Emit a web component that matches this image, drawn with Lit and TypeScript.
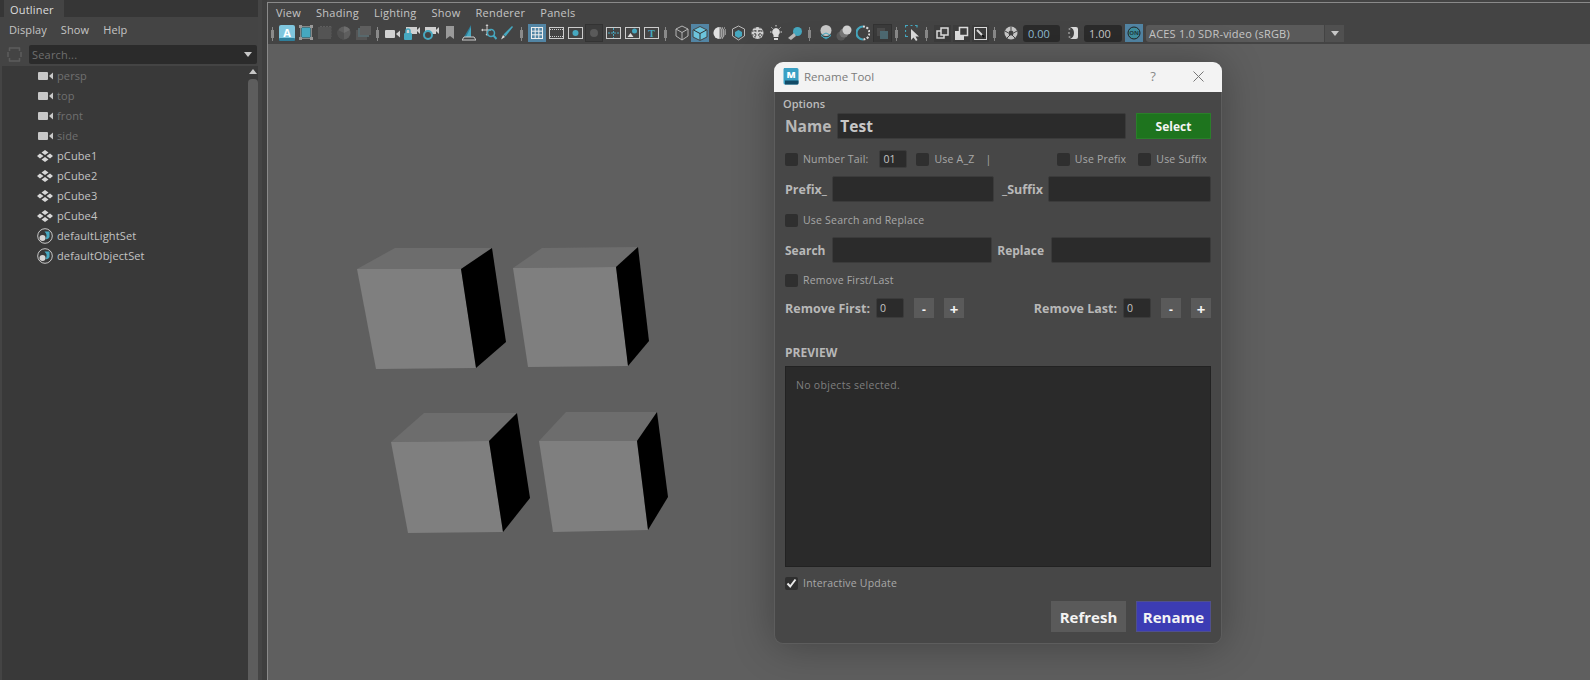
import { LitElement, html, css, svg } from "lit";
import { customElement } from "lit/decorators.js";

const L = "#d2d2d2";
const T = "#46a8c0";

const camera = (c = L) => svg`<rect x="0" y="4" width="10" height="8" rx="1" fill="${c}"/><path d="M11 8 15 4.500V11.500Z" fill="${c}"/>`;
const handle = svg`<rect x="1" y="3" width="1" height="14" fill="#888"/><rect x="0" y="6" width="3" height="8" fill="#8a8a8a"/>`;

type Tool = [number, number, ReturnType<typeof svg>];

const tools: Tool[] = [
  [271, 3, handle],
  [279, 16, svg`<rect x="0" y="1" width="16" height="15" rx="2" fill="#7fc6de"/><rect x="0" y="14" width="16" height="3" rx="1" fill="#2f7f9b"/><text x="8" y="12.500" font-size="11" font-weight="700" text-anchor="middle" fill="#fff" font-family="Open Sans">A</text>`],
  [299, 14, svg`<rect x="2.500" y="3.500" width="9" height="10" fill="${T}"/><rect x="1.500" y="2.500" width="11" height="12" fill="none" stroke="#888"/><rect x="0" y="1" width="3" height="3" fill="#999"/><rect x="11" y="1" width="3" height="3" fill="#999"/><rect x="0" y="13" width="3" height="3" fill="#999"/><rect x="11" y="13" width="3" height="3" fill="#999"/>`],
  [317, 15, svg`<rect x="1" y="3" width="13" height="12" fill="#545454"/><path d="M3 2.500H15V13" fill="none" stroke="#5d5d5d" stroke-dasharray="2 1"/>`],
  [336, 15, svg`<circle cx="8" cy="9" r="6.500" fill="#5e5e5e"/><path d="M8 9 14 6A6.500 6.500 0 0 0 8 2.500Z" fill="#6d6d6d"/><path d="M8 9 8 15.500A6.500 6.500 0 0 1 2 6Z" fill="#505050"/>`],
  [355, 16, svg`<rect x="1" y="6" width="11" height="10" fill="#555"/><rect x="3" y="4" width="11" height="9" fill="#58686c"/><rect x="5" y="2" width="11" height="9" fill="#5e5e5e"/>`],
  [376, 3, handle],
  [385, 15, svg`<g transform="translate(0 2)">${camera()}</g>`],
  [404, 16, svg`<g transform="translate(2 0)"><rect x="0" y="3" width="11" height="7" fill="#d0d0d0"/><path d="M10.500 6.500 14 3V10Z" fill="#d0d0d0"/></g><rect x="0" y="9" width="8" height="7" rx="1" fill="${T}"/><path d="M2 9V7A2 2 0 0 1 6 7V9" fill="none" stroke="${T}" stroke-width="1.500"/>`],
  [423, 16, svg`<g transform="translate(2 0)"><rect x="0" y="3" width="11" height="7" fill="#d0d0d0"/><path d="M10.500 6.500 14 3V10Z" fill="#d0d0d0"/></g><circle cx="5" cy="11" r="4" fill="#444" stroke="${T}" stroke-width="2"/>`],
  [446, 9, svg`<path d="M0 2H8V15L4 12 0 15Z" fill="#9a9a9a"/>`],
  [462, 14, svg`<path d="M9 1V13H2Z" fill="#2f7f9b"/><path d="M9 3V13H4Z" fill="${T}"/><path d="M2 13H12L14 16H0Z" fill="none" stroke="#ccc"/>`],
  [481, 16, svg`<path d="M6 1V11M1 6H10" stroke="#ccc"/><path d="M6 0 4.500 2H7.500ZM0 6 2 4.500V7.500ZM6 12 4.500 10H7.500Z" fill="#ccc"/><circle cx="10" cy="9" r="3.500" fill="none" stroke="${T}" stroke-width="1.500"/><path d="M12.500 11.500 15.500 15" stroke="${T}" stroke-width="2"/>`],
  [501, 12, svg`<path d="M11 2 12 3 4.500 12.500 2.500 10.500Z" fill="${T}"/><path d="M2 11 4 13 0 15.500Z" fill="#ddd"/>`],
  [520, 3, handle],
  [528, 18, svg`<rect width="18" height="18" fill="#5285a4"/><rect x="3.500" y="3.500" width="11" height="11" fill="none" stroke="#eee"/><path d="M3.500 7.200H14.500M3.500 10.800H14.500M7.200 3.500V14.500M10.800 3.500V14.500" stroke="#eee"/>`],
  [549, 16, svg`<rect x=".5" y="3.500" width="14" height="11" fill="none" stroke="#ccc"/><path d="M1 5.500H14M1 12.500H14" stroke="#ccc" stroke-dasharray="1 1"/>`],
  [568, 15, svg`<rect x=".5" y="3.500" width="14" height="11" fill="none" stroke="#ccc"/><circle cx="7.500" cy="9" r="3" fill="${T}"/>`],
  [585, 18, svg`<rect x=".5" y=".5" width="17" height="17" fill="#3c3c3c" stroke="#333"/><circle cx="9" cy="9" r="4" fill="#5a5a5a"/>`],
  [606, 15, svg`<rect x=".5" y="3.500" width="14" height="11" fill="none" stroke="#ccc"/><path d="M7.500 4V14" stroke="${T}" stroke-dasharray="2 1"/><path d="M2 9H13" stroke="${T}" stroke-dasharray="2 1"/>`],
  [625, 15, svg`<rect x=".5" y="3.500" width="14" height="11" fill="none" stroke="#ccc"/><circle cx="9.500" cy="7" r="2.500" fill="${T}"/><path d="M2.500 13 5.500 9 8.500 13Z" fill="#ddd"/>`],
  [644, 15, svg`<rect x=".5" y="3.500" width="14" height="11" fill="none" stroke="#ccc"/><text x="7.500" y="13" font-size="10" font-weight="700" text-anchor="middle" fill="${T}" font-family="Liberation Serif">T</text>`],
  [664, 3, handle],
  [675, 14, svg`<path d="M7 2 13 5V12L7 16 1 12V5ZM1 5 7 8.500 13 5M7 8.500V16" fill="none" stroke="#b5b5b5"/>`],
  [691, 18, svg`<rect width="18" height="18" fill="#5285a4"/><path d="M9 2.500 16 6V13L9 16.500 2 13V6Z" fill="#6cc4dc" stroke="#444"/><path d="M2.500 6 9 9.500 15.500 6" fill="none" stroke="#333"/><path d="M9 9.500V16" stroke="#333"/>`],
  [713, 13, svg`<circle cx="6.500" cy="9" r="6" fill="#777"/><path d="M6.500 3A6 6 0 0 0 6.500 15Z" fill="#e0e0e0"/><path d="M7 4H12M8 6H13M8 8H13M8 10H13M8 12H12M7 14H11" stroke="#ccc" stroke-dasharray="1 1"/>`],
  [732, 13, svg`<path d="M6.500 2 12.500 5V12L6.500 16 .5 12V5Z" fill="none" stroke="#b8b8b8"/><path d="M6.500 6 10 8V12L6.500 14 3 12V8Z" fill="${T}"/>`],
  [751, 13, svg`<circle cx="6.500" cy="9" r="6" fill="#d0d0d0"/><path d="M1 7H12M1 11H12M4 3V15M9 3V15" stroke="#555" stroke-width="1.500" stroke-dasharray="1.500 1.500"/>`],
  [769, 14, svg`<path d="M7 4A4 4 0 0 1 9.500 11V13H4.500V11A4 4 0 0 1 7 4Z" fill="#ddd"/><rect x="5" y="14" width="4" height="2" fill="#ddd"/><path d="M1 8H2.500M11.500 8H13M2.500 3.500 3.500 4.500M11.500 3.500 10.500 4.500M7 1V2.500" stroke="#ddd"/>`],
  [788, 14, svg`<circle cx="9.500" cy="7.500" r="4.500" fill="${T}"/><path d="M0 14 6 9 8 12 3 16Z" fill="#bbb"/>`],
  [808, 3, handle],
  [820, 12, svg`<circle cx="6" cy="6.500" r="5.500" fill="#c8c8c8"/><path d="M1 11.500 6 9 11 11.500 6 15Z" fill="none" stroke="${T}"/><path d="M3 13.500H9" stroke="${T}"/>`],
  [836, 16, svg`<circle cx="5" cy="12" r="4.500" fill="#5b5b5b"/><circle cx="8" cy="9" r="4.500" fill="#787878"/><circle cx="11" cy="6" r="4.500" fill="#d2d2d2"/>`],
  [856, 14, svg`<path d="M7 2.500A6.500 6.500 0 0 0 7 15.500" fill="none" stroke="${T}" stroke-width="2.200"/><path d="M7 2.500A6.500 6.500 0 0 1 7 15.500" fill="none" stroke="#ddd" stroke-width="2.200" stroke-dasharray="2 1.500"/>`],
  [873, 19, svg`<rect x=".5" y=".5" width="18" height="18" fill="#3b3b3b" stroke="#333"/><rect x="4" y="4" width="8" height="8" fill="#4b4b4b"/><rect x="7" y="7" width="8" height="8" fill="#4e6a72"/>`],
  [895, 3, handle],
  [905, 14, svg`<path d="M.5 3.500V1.500H3M5.500 1.500H7.500M10 1.500H12V3.500M.5 6V8M.5 10.500V12.500H3" fill="none" stroke="${T}" stroke-width="1.200"/><path d="M6 5V16L8.500 13.500 11 17 12.500 16 10.500 12.500H14Z" fill="#ddd"/>`],
  [925, 3, handle],
  [934, 17, svg`<rect width="17" height="17" y="1" fill="#3d3d3d"/><rect x="3" y="7" width="7" height="7" fill="#444" stroke="#ddd" stroke-width="1.500"/><rect x="7" y="4" width="7" height="7" fill="#444" stroke="#ddd" stroke-width="1.500"/>`],
  [953, 17, svg`<rect width="17" height="17" y="1" fill="#3d3d3d"/><rect x="2" y="7" width="9" height="9" fill="#ddd"/><rect x="6.500" y="3.500" width="8" height="8" fill="#3d3d3d" stroke="#ddd" stroke-width="1.500"/>`],
  [972, 17, svg`<rect width="17" height="17" y="1" fill="#3d3d3d"/><rect x="2.500" y="3.500" width="12" height="12" fill="none" stroke="#ddd"/><path d="M5 6 11 12" stroke="#ddd" stroke-width="2"/><path d="M10 11 12 13" stroke="#111" stroke-width="2"/>`],
  [993, 3, handle],
  [1004, 14, svg`<circle cx="7" cy="9" r="6.500" fill="#c8c8c8"/><circle cx="7" cy="9" r="2.500" fill="#444"/><path d="M7 2.500V6.500M13 7 9.500 9M11 14 8 11M3 14 6 11M1 7 4.500 9" stroke="#444"/>`],
];

const gammaIcon = svg`<path d="M2 3H8A2 2 0 0 1 10 5V13A2 2 0 0 1 8 15H2A6.500 6.500 0 0 0 2 3Z" fill="#ddd"/><circle cx="1.500" cy="5" r="1" fill="#9a9a9a"/><circle cx="1" cy="9" r="1" fill="#9a9a9a"/><circle cx="1.500" cy="13" r="1" fill="#9a9a9a"/>`;

const cubes = [
  { top: "357,269 395,248 492,248 461,269", front: "357,269 461,269 476,368 376,369", side: "461,269 492,248 506,342 476,368" },
  { top: "513,268 542,248 638,247 616,267", front: "513,268 616,267 628,366 528,367", side: "616,267 638,247 649,341 628,366" },
  { top: "391,442 424,413 517,413 489,441", front: "391,442 489,441 503,532 408,533", side: "489,441 517,413 530,498 503,532" },
  { top: "539,441 566,412 657,412 637,441", front: "539,441 637,441 648,530 553,532", side: "637,441 657,412 668,497 648,530" },
];

const transformIcon = svg`<svg width="16" height="16" viewBox="0 0 16 16"><g fill="#d8d8d8"><path d="M8 2 11.500 4.500 8 7 4.500 4.500Z"/><path d="M8 9 11.500 11.500 8 14 4.500 11.500Z"/><path d="M3 5.500 6.500 8 3 10.500 0 8Z"/><path d="M13 5.500 16 8 13 10.500 9.500 8Z"/></g></svg>`;
const setIcon = svg`<svg width="16" height="16" viewBox="0 0 16 16"><circle cx="8" cy="8" r="7.300" fill="none" stroke="#c8c8c8"/><path d="M7.500 3.500H12.500V9A3.500 3.500 0 0 1 8.500 11 6 6 0 0 0 7.500 3.500Z" fill="${T}"/><circle cx="5.500" cy="10" r="3" fill="#d5d5d5"/></svg>`;
const camIcon = svg`<svg width="16" height="16" viewBox="0 0 16 16"><g transform="translate(1 0)">${camera("#c8c8c8")}</g></svg>`;

const rows = [
  { n: "persp", i: camIcon, dim: true },
  { n: "top", i: camIcon, dim: true },
  { n: "front", i: camIcon, dim: true },
  { n: "side", i: camIcon, dim: true },
  { n: "pCube1", i: transformIcon },
  { n: "pCube2", i: transformIcon },
  { n: "pCube3", i: transformIcon },
  { n: "pCube4", i: transformIcon },
  { n: "defaultLightSet", i: setIcon },
  { n: "defaultObjectSet", i: setIcon },
];

@customElement("app-root")
export class AppRoot extends LitElement {
  static styles = css`
    :host {
      display: flex;
      position: relative;
      width: 1590px;
      height: 680px;
      overflow: hidden;
      background: #444;
      font-family: "Open Sans", sans-serif;
      font-size: 11px;
      color: #c8c8c8;
    }
    .outliner { width: 258px; flex: none; display: flex; flex-direction: column; background: #444; }
    .tabs { height: 17px; background: #363636; padding-left: 4px; flex: none; display: flex; }
    .tab { width: 60px; background: #444; color: #ddd; font-size: 11px; line-height: 19px; padding-left: 6px; box-sizing: border-box; letter-spacing: .2px; }
    .menu { height: 25px; display: flex; align-items: center; gap: 14px; padding-left: 9px; flex: none; letter-spacing: .1px; color: #c4c4c4; font-size: 11px; }
    .search { height: 24px; display: flex; align-items: flex-start; padding-left: 7px; flex: none; gap: 7px; }
    .search-field { width: 228px; height: 19px; margin-top: 3px; background: #2b2b2b; border-radius: 2px; display: flex; align-items: center; justify-content: space-between; padding: 0 5px 0 3px; box-sizing: border-box; color: #6f6f6f; letter-spacing: .2px; }
    .tree { flex: 1; background: #393939; margin-left: 2px; display: flex; min-height: 0; }
    .tree-list { flex: 1; }
    .row { height: 20px; display: flex; align-items: center; gap: 4px; padding-left: 35px; color: #c4c4c4; letter-spacing: .12px; }
    .row span { margin-bottom: 2px; }
    .row.dim { color: #707070; }
    .scroll { width: 10px; flex: none; display: flex; flex-direction: column; align-items: center; }
    .scroll-arrow { width: 0; height: 0; border: 4px solid transparent; border-top: 0; border-bottom: 5px solid #c8c8c8; margin: 3px 0 5px; }
    .thumb { flex: 1; width: 10px; background: #5d5d5d; border-radius: 4px 4px 0 0; }
    .sash { width: 9px; flex: none; background: linear-gradient(90deg, #454545 0 4px, #3f3f3f 4px); }
    .view { flex: 1; display: flex; flex-direction: column; min-width: 0; padding-top: 2px; }
    .frame { flex: 1; display: flex; flex-direction: column; border-left: 1px solid #8a8a8a; border-top: 1px solid #8a8a8a; min-height: 0; }
    .bar { height: 41px; flex: none; background: #444; }
    .vmenu { height: 19px; display: flex; align-items: center; gap: 15px; padding-left: 8px; letter-spacing: .25px; color: #c4c4c4; font-size: 11px; }
    .tools { height: 18px; margin-top: 2px; display: flex; align-items: center; }
    .tool { display: block; flex: none; height: 18px; }
    .num { flex: none; height: 17px; background: #2b2b2b; border-radius: 3px; box-sizing: border-box; display: flex; align-items: center; padding-left: 5px; font-size: 11px; }
    .num.blue { width: 37px; color: #8fbcd4; margin-left: 5px; }
    .num.white { width: 38px; color: #c8c8c8; margin-left: 6px; }
    .gamma { margin-left: 8px; }
    .on { width: 18px; height: 18px; flex: none; margin-left: 3px; background: #5285a4; display: flex; align-items: center; justify-content: center; }
    .combo { width: 198px; height: 17px; margin-left: 3px; flex: none; background: #5a5a5a; border-radius: 3px; display: flex; align-items: center; box-sizing: border-box; padding-left: 3px; color: #c8c8c8; letter-spacing: .2px; }
    .combo span { flex: 1; }
    .combo i { width: 20px; height: 17px; background: #505050; border-left: 1px solid #444; box-sizing: border-box; display: flex; align-items: center; justify-content: center; }
    .tri { width: 0; height: 0; border: 4.500px solid transparent; border-bottom: 0; border-top: 5px solid #c8c8c8; }
    .canvas { flex: 1; background: #5f5f5f; position: relative; min-height: 0; }
    .canvas svg { position: absolute; inset: 0; display: block; }

    .dialog {
      position: absolute;
      left: 774px;
      top: 62px;
      width: 448px;
      height: 582px;
      display: flex;
      flex-direction: column;
      border-radius: 9px;
      box-shadow: 0 2px 42px rgba(0, 0, 0, 0.3);
      overflow: hidden;
      color: #b9b9b9;
    }
    .title { height: 30px; box-sizing: border-box; padding: 0 0 2px 9px; flex: none; background: #f3f3f3; display: flex; align-items: center; color: #7b7b7b; font-size: 11.500px; gap: 5px; }
    .title .grow { flex: 1; }
    .title .q { width: 12px; text-align: center; font-size: 13px; color: #888; margin-right: 29px; }
    .title .x { margin-right: 18px; display: block; }
    .body { flex: 1; display: flex; flex-direction: column; padding: 0 10px; min-height: 0; background: #474747; border: 1px solid #5d5d5d; border-top: 0; border-radius: 0 0 9px 9px; }
    .opts { height: 19px; margin-top: 2px; margin-left: -2px; font-weight: 600; font-size: 11px; line-height: 20px; color: #bcbcbc; }
    .line { display: flex; align-items: center; flex: none; }
    .name { height: 26px; }
    .lbl { font-weight: 700; font-size: 12.500px; color: #b8b8b8; white-space: nowrap; }
    .lbl.big { font-size: 15.500px; }
    .lbl.md { font-size: 12px; }
    .field { background: #2b2b2b; border: 1px solid #3b3b3b; border-radius: 2px; box-sizing: border-box; height: 100%; display: flex; align-items: center; }
    .field.name-f { width: 289px; margin-left: 6px; font-weight: 700; font-size: 15.500px; color: #c8c8c8; padding-left: 2px; }
    .btn { display: flex; align-items: center; justify-content: center; font-weight: 700; color: #f4f4f4; box-sizing: border-box; flex: none; }
    .sel { width: 75px; height: 26px; margin-left: auto; background: #1e741e; border: 1px solid #2a7f2a; font-size: 12px; }
    .cb { width: 13px; height: 13px; flex: none; background: #2f2f2f; border-radius: 2px; display: flex; align-items: center; justify-content: center; }
    .cbl { margin-left: 5px; font-size: 10.500px; color: #a8a8a8; letter-spacing: .2px; white-space: nowrap; }
    .r2 { height: 18px; margin-top: 11px; }
    .small { width: 28px; height: 18px; margin-left: 11px; font-size: 10.500px; padding-left: 3px; color: #c4c4c4; flex: none; }
    .r3 { height: 26px; margin-top: 8px; }
    .f162 { width: 162px; flex: none; margin-left: 5px; }
    .f160 { width: 160px; flex: none; margin-left: 7px; }
    .f163 { width: 163px; flex: none; margin-left: 5px; }
    .pushr { margin-left: auto; }
    .r4 { height: 14px; margin-top: 11px; }
    .r5 { height: 26px; margin-top: 10px; }
    .r6 { height: 14px; margin-top: 10px; }
    .r7 { height: 20px; margin-top: 11px; }
    .r7 .lbl { padding-top: 1px; }
    .num-f { width: 28px; height: 20px; margin-left: 6px; font-size: 10.500px; padding-left: 3px; color: #c4c4c4; flex: none; }
    .step { width: 20px; height: 20px; margin-left: 10px; background: #5a5a5a; font-size: 12px; line-height: 1; padding-top: 3px; }
    .step.plus { font-size: 15px; padding-top: 2px; }
    .pv-l { height: 16px; margin-top: 27px; font-weight: 700; font-size: 12px; line-height: 16px; color: #b8b8b8; }
    .pv { height: 201px; margin-top: 5px; flex: none; background: #2a2a2a; border: 1px solid #222; box-sizing: border-box; padding: 11px 10px; color: #7f7f7f; font-size: 10.500px; letter-spacing: .3px; }
    .r8 { height: 14px; margin-top: 9px; }
    .r9 { height: 31px; margin-top: 11px; justify-content: flex-end; gap: 10px; }
    .foot { width: 75px; height: 31px; font-size: 15px; }
    .refresh { background: #5a5a5a; }
    .rename { background: #3c3cb4; border: 1px solid #50508c; }
    .s9 { width: 9px; flex: none; }
    .s12 { width: 12px; flex: none; }
    .s4 { width: 4px; flex: none; }
    .bar-mark { margin-left: 11px; }
    .frame-icon { margin-top: 4px; }
  `;

  private toolbar() {
    let prev = 268;
    return tools.map(([x, w, g]) => {
      const m = x - prev;
      prev = x + w;
      return html`<svg class="tool" style="margin-left:${m}px" width="${w}" height="18" viewBox="0 0 ${w} 18">${g}</svg>`;
    });
  }

  private cb(label: string, checked = false) {
    return html`<span class="cb">${checked
      ? html`<svg width="11" height="11" viewBox="0 0 11 11"><path d="M1.500 5.500 4.200 8.500 9.500 1.500" fill="none" stroke="#e8e8e8" stroke-width="2"/></svg>`
      : ""}</span><span class="cbl">${label}</span>`;
  }

  render() {
    return html`
      <div class="outliner">
        <div class="tabs"><div class="tab">Outliner</div></div>
        <div class="menu"><span>Display</span><span>Show</span><span>Help</span></div>
        <div class="search">
          <svg class="frame-icon" width="15" height="17" viewBox="0 0 15 17"><path d="M2.500 1.500V5M12.500 1.500V5M2.500 12V15.500M12.500 12V15.500M2 2H13M2 15H13M1 6V11M14 6V11" stroke="#5c5c5c" stroke-width="1.500" fill="none"/></svg>
          <div class="search-field"><span>Search...</span><span class="tri"></span></div>
        </div>
        <div class="tree">
          <div class="tree-list">
            ${rows.map((r) => html`<div class="row ${r.dim ? "dim" : ""}">${r.i}<span>${r.n}</span></div>`)}
          </div>
          <div class="scroll"><span class="scroll-arrow"></span><div class="thumb"></div></div>
        </div>
      </div>
      <div class="sash"></div>
      <div class="view">
        <div class="frame">
          <div class="bar">
            <div class="vmenu">
              <span>View</span><span>Shading</span><span>Lighting</span><span>Show</span><span>Renderer</span><span>Panels</span>
            </div>
            <div class="tools">
              ${this.toolbar()}
              <span class="num blue">0.00</span>
              <svg class="tool gamma" width="10" height="18" viewBox="0 0 10 18">${gammaIcon}</svg>
              <span class="num white">1.00</span>
              <span class="on"><svg width="14" height="14" viewBox="0 0 14 14"><circle cx="7" cy="7" r="6" fill="#3f8f9f" stroke="#222"/><text x="7" y="9.200" font-size="6" font-weight="700" text-anchor="middle" fill="#1f3a40" font-family="Open Sans">ON</text></svg></span>
              <div class="combo"><span>ACES 1.0 SDR-video (sRGB)</span><i><b class="tri"></b></i></div>
            </div>
          </div>
          <div class="canvas">
            <svg width="1322" height="636" viewBox="268 44 1322 636">
              ${cubes.map((c) => svg`
                <polygon points="${c.top}" fill="#6d6d6d"/>
                <polygon points="${c.front}" fill="#7f7f7f"/>
                <polygon points="${c.side}" fill="#000"/>
              `)}
            </svg>
          </div>
        </div>
      </div>

      <div class="dialog">
        <div class="title">
          <svg width="16" height="17" viewBox="0 0 16 17"><path d="M1 0H14A1.500 1.500 0 0 1 15.500 1.500V15A1.500 1.500 0 0 1 14 16.500H2A1.500 1.500 0 0 1 .5 15V1.500Z" fill="#3aa0c4"/><path d="M2 12.500H15.500V15A1.500 1.500 0 0 1 14 16.500H2Z" fill="#124a66"/><text x="8" y="10" font-size="9.500" font-weight="800" text-anchor="middle" fill="#fff" font-family="Open Sans">M</text></svg>
          <span>Rename Tool</span>
          <span class="grow"></span>
          <span class="q">?</span>
          <svg class="x" width="11" height="11" viewBox="0 0 11 11"><path d="M.5 .5 10.500 10.500M10.500 .5 .5 10.500" stroke="#777" stroke-width="1"/></svg>
        </div>
        <div class="body">
          <div class="opts">Options</div>
          <div class="line name">
            <span class="lbl big">Name</span>
            <div class="field name-f">Test</div>
            <div class="btn sel">Select</div>
          </div>
          <div class="line r2">
            ${this.cb("Number Tail:")}
            <div class="field small">01</div>
            <span class="s9"></span>
            ${this.cb("Use A_Z")}
            <span class="cbl bar-mark">|</span>
            <span class="pushr"></span>
            ${this.cb("Use Prefix")}
            <span class="s12"></span>
            ${this.cb("Use Suffix")}
            <span class="s4"></span>
          </div>
          <div class="line r3">
            <span class="lbl">Prefix_</span>
            <div class="field f162"></div>
            <span class="lbl pushr">_Suffix</span>
            <div class="field f163"></div>
          </div>
          <div class="line r4">${this.cb("Use Search and Replace")}</div>
          <div class="line r5">
            <span class="lbl md">Search</span>
            <div class="field f160"></div>
            <span class="lbl md pushr">Replace</span>
            <div class="field f160"></div>
          </div>
          <div class="line r6">${this.cb("Remove First/Last")}</div>
          <div class="line r7">
            <span class="lbl">Remove First:</span>
            <div class="field num-f">0</div>
            <div class="btn step">-</div>
            <div class="btn step plus">+</div>
            <span class="lbl pushr">Remove Last:</span>
            <div class="field num-f">0</div>
            <div class="btn step">-</div>
            <div class="btn step plus">+</div>
          </div>
          <div class="pv-l">PREVIEW</div>
          <div class="pv">No objects selected.</div>
          <div class="line r8">${this.cb("Interactive Update", true)}</div>
          <div class="line r9">
            <div class="btn foot refresh">Refresh</div>
            <div class="btn foot rename">Rename</div>
          </div>
        </div>
      </div>
    `;
  }
}
